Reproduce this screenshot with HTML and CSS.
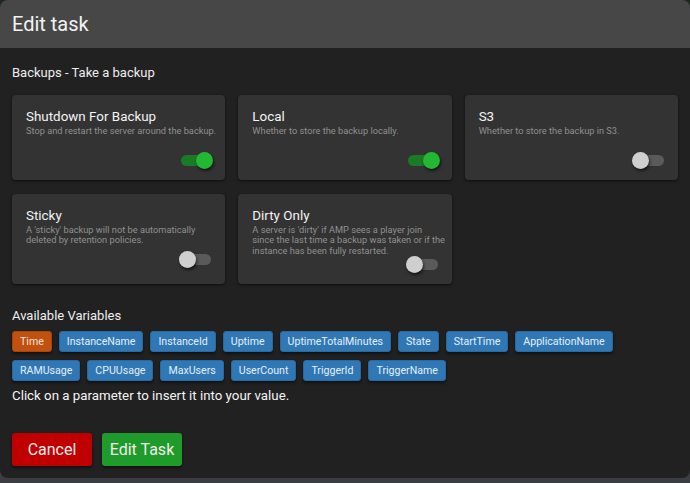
FILE: index.html
```html
<!DOCTYPE html>
<html lang="en">
<head>
    <meta charset="UTF-8">
    <meta name="viewport" content="width=device-width, initial-scale=1.0">
    <title>Edit task</title>
    <link rel="stylesheet" href="styles.css">
</head>
<body>

    <div class="dialog">
        <div class="dialog-header">Edit task</div>

        <div class="dialog-body">
            <h2 class="section-title">Backups - Take a backup</h2>

            <div class="option-grid">
                <div class="option-card">
                    <div class="option-title">Shutdown For Backup</div>
                    <div class="option-desc">Stop and restart the server around the backup.</div>
                    <div class="switch on"><span class="track"></span><span class="knob"></span></div>
                </div>
                <div class="option-card">
                    <div class="option-title">Local</div>
                    <div class="option-desc">Whether to store the backup locally.</div>
                    <div class="switch on"><span class="track"></span><span class="knob"></span></div>
                </div>
                <div class="option-card">
                    <div class="option-title">S3</div>
                    <div class="option-desc">Whether to store the backup in S3.</div>
                    <div class="switch"><span class="track"></span><span class="knob"></span></div>
                </div>
                <div class="option-card">
                    <div class="option-title">Sticky</div>
                    <div class="option-desc">A 'sticky' backup will not be automatically<br>deleted by retention policies.</div>
                    <div class="switch"><span class="track"></span><span class="knob"></span></div>
                </div>
                <div class="option-card">
                    <div class="option-title">Dirty Only</div>
                    <div class="option-desc">A server is 'dirty' if AMP sees a player join<br>since the last time a backup was taken or if the<br>instance has been fully restarted.</div>
                    <div class="switch"><span class="track"></span><span class="knob"></span></div>
                </div>
            </div>

            <div class="vars-title">Available Variables</div>
            <div class="vars">
                <span class="chip active">Time</span>
                <span class="chip">InstanceName</span>
                <span class="chip">InstanceId</span>
                <span class="chip">Uptime</span>
                <span class="chip">UptimeTotalMinutes</span>
                <span class="chip">State</span>
                <span class="chip">StartTime</span>
                <span class="chip">ApplicationName</span>
                <span class="chip">RAMUsage</span>
                <span class="chip">CPUUsage</span>
                <span class="chip">MaxUsers</span>
                <span class="chip">UserCount</span>
                <span class="chip">TriggerId</span>
                <span class="chip">TriggerName</span>
            </div>
            <div class="vars-hint">Click on a parameter to insert it into your value.</div>

            <div class="actions">
                <button class="btn btn-cancel">Cancel</button>
                <button class="btn btn-save">Edit Task</button>
            </div>
        </div>
    </div>

</body>
</html>
```

FILE: styles.css
```css
body {
    margin: 0;
    height: 483px;
    background: linear-gradient(#1b2a1d 0, #1b2a1d 40px, #3a3e43 40px);
    font-family: Roboto, "Liberation Sans", sans-serif;
    color: #eeeeee;
}

.dialog {
    height: 478px;
    background-color: #212121;
    border-radius: 8px;
    overflow: hidden;
}

.dialog-header {
    height: 48px;
    padding: 0 12px;
    display: flex;
    align-items: center;
    background-color: #474747;
    font-size: 20px;
    color: #f2f2f2;
}

.dialog-body {
    padding: 17px 12px 0 12px;
}

.section-title {
    margin: 0 0 14px 0;
    font-size: 13px;
    font-weight: normal;
    line-height: 16px;
}

.option-grid {
    display: grid;
    grid-template-columns: repeat(3, minmax(0, 1fr));
    column-gap: 13px;
    row-gap: 14px;
}

.option-card {
    display: flex;
    flex-direction: column;
    padding: 14px 12px 11px 14px;
    background-color: #333333;
    border-radius: 4px;
    box-shadow: 0 1px 3px rgba(0, 0, 0, 0.6);
}

    .option-title {
        font-size: 13.4px;
        line-height: 16px;
        color: #f4f4f4;
    }

    .option-desc {
        min-height: 26px;
        margin: 1px -9px 0 0;
        font-size: 9.25px;
        line-height: 10.3px;
        color: #909090;
    }

.switch {
    position: relative;
    align-self: flex-end;
    width: 34px;
    height: 17px;
}

    .switch .track {
        position: absolute;
        left: 2px;
        top: 3px;
        width: 30px;
        height: 11px;
        border-radius: 6px;
        background-color: #5a5a5a;
    }

    .switch .knob {
        position: absolute;
        left: 0;
        top: 0;
        width: 17px;
        height: 17px;
        border-radius: 50%;
        background-color: #cfcfcf;
        box-shadow: 1px 2px 3px rgba(0, 0, 0, 0.6);
    }

    .switch.on .track {
        background-color: #1b7a26;
    }

    .switch.on .knob {
        left: 17px;
        background-color: #23b734;
    }

.vars-title {
    margin-top: 24px;
    font-size: 13px;
    line-height: 16px;
}

.vars {
    display: flex;
    flex-wrap: wrap;
    gap: 8px 7px;
    margin-top: 7px;
}

.chip {
    padding: 3px 7px;
    font-size: 10.6px;
    line-height: 13px;
    color: #e6eef6;
    background-color: #2f78b5;
    border: 1px solid #286aa0;
    border-radius: 3px;
    box-shadow: 0 2px 3px rgba(0, 0, 0, 0.5);
}

    .chip.active {
        background-color: #c2500e;
        border-color: #a9450b;
        color: #f6e6dc;
    }

.vars-hint {
    margin-top: 7px;
    font-size: 13.3px;
    line-height: 16px;
    color: #f4f4f4;
}

.actions {
    display: flex;
    gap: 10px;
    margin-top: 29px;
}

.btn {
    width: 80px;
    height: 33px;
    padding: 0;
    border: none;
    border-radius: 3px;
    font-family: Roboto, "Liberation Sans", sans-serif;
    font-size: 16px;
    color: #f2ecec;
    box-shadow: 0 2px 3px rgba(0, 0, 0, 0.5);
}

.btn-cancel {
    background-color: #c00000;
}

.btn-save {
    background-color: #1e9b2a;
}
```
